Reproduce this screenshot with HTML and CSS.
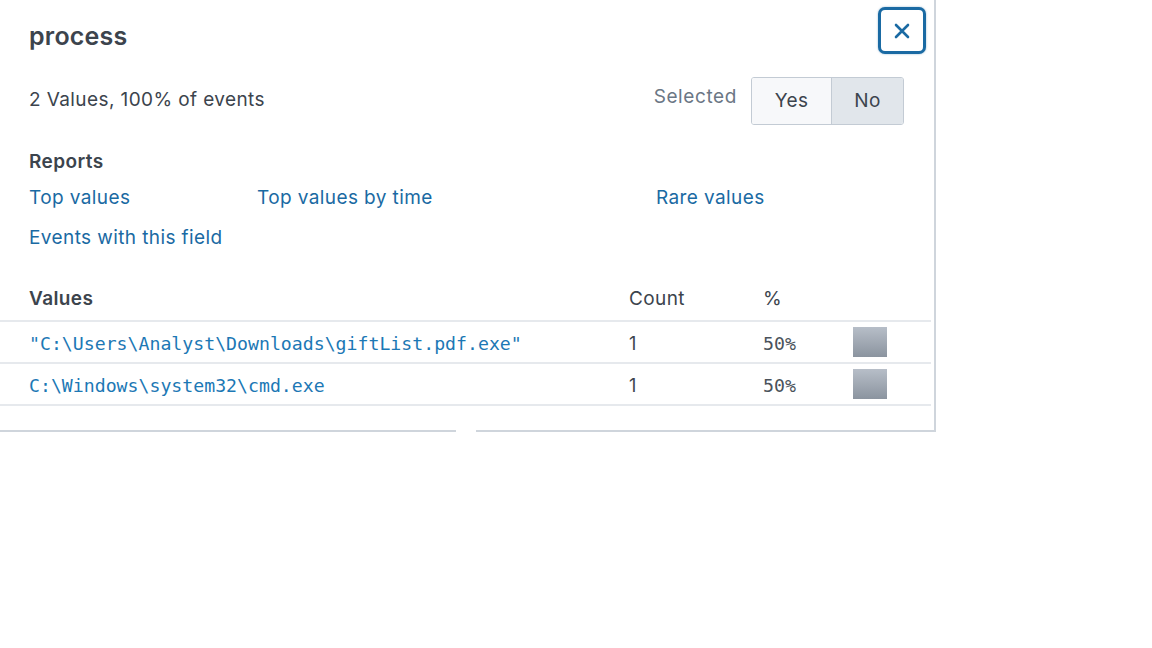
FILE: index.html
```html
<!DOCTYPE html>
<html>
<head>
<meta charset="utf-8">
<link rel="stylesheet" href="styles.css">
</head>
<body>
<div class="panel">
  <div class="head">
    <h1 class="title">process</h1>
    <button class="close" aria-label="Close">
      <svg width="18" height="18" viewBox="0 0 18 18"><path d="M3 3 L15 15 M15 3 L3 15" stroke="#1a6aa3" stroke-width="2.6" stroke-linecap="round" fill="none"/></svg>
    </button>
  </div>
  <div class="summary">
    <div class="stats">2 Values, 100% of events</div>
    <div class="selected">
      <span class="sel-label">Selected</span>
      <div class="toggle"><span class="opt">Yes</span><span class="opt active">No</span></div>
    </div>
  </div>
  <div class="reports">
    <div class="section-title">Reports</div>
    <div class="links">
      <a class="link">Top values</a>
      <a class="link">Top values by time</a>
      <a class="link">Rare values</a>
      <a class="link">Events with this field</a>
    </div>
  </div>
  <div class="table">
    <div class="trow thead">
      <div class="c-val section-title">Values</div>
      <div class="c-count">Count</div>
      <div class="c-pct">%</div>
      <div class="c-bar"></div>
    </div>
    <div class="trow tbody">
      <div class="c-val mono val">"C:\Users\Analyst\Downloads\giftList.pdf.exe"</div>
      <div class="c-count num">1</div>
      <div class="c-pct mono">50%</div>
      <div class="c-bar"><span class="bar"></span></div>
    </div>
    <div class="trow tbody">
      <div class="c-val mono val">C:\Windows\system32\cmd.exe</div>
      <div class="c-count num">1</div>
      <div class="c-pct mono">50%</div>
      <div class="c-bar"><span class="bar"></span></div>
    </div>
  </div>
  <span class="notch"></span>
</div>
</body>
</html>
```
FILE: styles.css
```css
html, body { margin: 0; padding: 0; background: #fff; }
body {
  font-family: Inter, "Open Sans", sans-serif;
  color: #3c444d;
  width: 1152px;
  height: 648px;
  overflow: hidden;
  font-size: 19px;
  letter-spacing: 0.4px;
  line-height: 24px;
}
.panel {
  position: relative;
  width: 934px;
  height: 430px;
  background: #fff;
  border-right: 2px solid #cfd5dc;
  border-bottom: 2px solid #cfd5dc;
  box-sizing: content-box;
}
.head {
  display: flex;
  justify-content: space-between;
  align-items: flex-start;
  padding: 7px 8px 0 29px;
  height: 57px;
  box-sizing: border-box;
}
.title {
  margin: 14px 0 0 0;
  font-size: 25px;
  font-weight: 600;
  line-height: 30px;
  letter-spacing: 0.2px;
  color: #3c444d;
}
.close {
  width: 48px;
  height: 47px;
  border: 3px solid #1a6aa3;
  border-radius: 7px;
  background: #fff;
  display: flex;
  align-items: center;
  justify-content: center;
  padding: 0;
  box-shadow: 0 0 2px rgba(26,106,163,.5);
}
.summary {
  display: flex;
  justify-content: space-between;
  align-items: center;
  padding: 0 30px 0 29px;
  margin-top: 20px;
}
.stats { margin-top: -2px; }
.selected { display: flex; align-items: center; gap: 14px; }
.sel-label { color: #6b7785; margin-top: -8px; letter-spacing: 0.6px; }
.toggle {
  display: flex;
  border: 1px solid #c3cbd4;
  border-radius: 3px;
  overflow: hidden;
  height: 48px;
  box-sizing: border-box;
}
.opt {
  display: flex; align-items: center; justify-content: center;
  color: #3c444d;
  background: #f7f8fa;
  width: 79px;
}
.opt + .opt { border-left: 1px solid #c3cbd4; width: 71px; }
.opt.active { background: #e1e6eb; }
.reports { padding: 25px 0 0 29px; }
.section-title { font-weight: 600; color: #3c444d; }
.links {
  display: grid;
  grid-template-columns: 228px 399px auto;
  row-gap: 16px;
  margin-top: 12px;
}
.link { color: #1a6aa3; }
.table { margin-top: 37px; width: 931px; }
.trow {
  display: grid;
  grid-template-columns: 29px 600px 134px 90px 1fr;
  align-items: center;
  box-sizing: border-box;
}
.trow::before { content: ""; }
.thead { height: 35px; border-bottom: 2px solid #e6e9ed; align-items: start; }
.tbody { height: 42px; border-bottom: 2px solid #e6e9ed; padding-top: 4px; }
.num { font-size: 18px; }
.mono { font-family: "DejaVu Sans Mono", monospace; font-size: 18.2px; letter-spacing: 0; }
.c-pct.mono { color: #4a525b; }
.val { color: #1c78b5; }
.bar {
  display: block;
  width: 34px;
  height: 30px;
  margin-top: -4px;
  background: linear-gradient(#b7bec8, #8b949f);
}
.notch {
  position: absolute;
  left: 456px;
  bottom: -2px;
  width: 20px;
  height: 2px;
  background: #fff;
}
```
